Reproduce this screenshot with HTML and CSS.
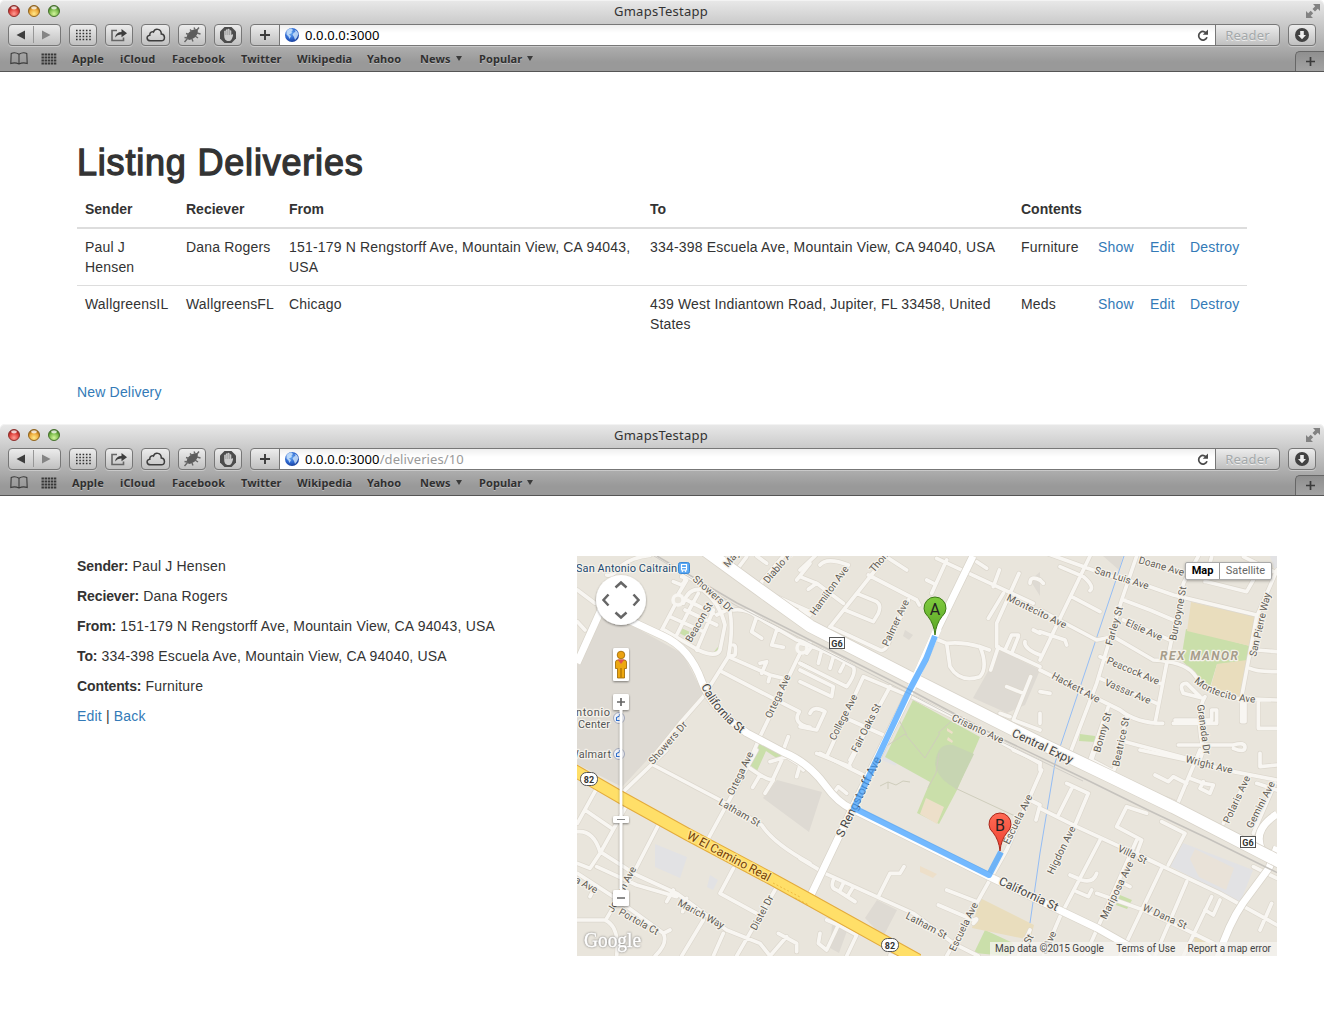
FILE: index.html
```html
<!DOCTYPE html>
<html lang="en">
<head>
<meta charset="utf-8">
<title>GmapsTestapp</title>
<link rel="stylesheet" href="styles.css">
</head>
<body>
<svg class="sprite" width="0" height="0" aria-hidden="true">
  <defs>
    <radialGradient id="red" cx=".5" cy=".75" r=".7"><stop offset="0" stop-color="#ff9d93"/><stop offset=".6" stop-color="#e0443e"/><stop offset="1" stop-color="#8f1a16"/></radialGradient>
    <radialGradient id="amber" cx=".5" cy=".75" r=".7"><stop offset="0" stop-color="#ffe98a"/><stop offset=".6" stop-color="#eda93a"/><stop offset="1" stop-color="#8f5a10"/></radialGradient>
    <radialGradient id="green" cx=".5" cy=".75" r=".7"><stop offset="0" stop-color="#d3f59c"/><stop offset=".6" stop-color="#7cbc4c"/><stop offset="1" stop-color="#366b1a"/></radialGradient>
    <radialGradient id="globe" cx=".4" cy=".35" r=".7"><stop offset="0" stop-color="#6fb0f5"/><stop offset=".6" stop-color="#2c66cf"/><stop offset="1" stop-color="#163a94"/></radialGradient>
  </defs>
  <symbol id="lights" viewBox="0 0 54 14">
    <g stroke-width="1"><circle cx="7" cy="7" r="5.500" fill="url(#red)" stroke="#8c3330"/><circle cx="27" cy="7" r="5.500" fill="url(#amber)" stroke="#8f6520"/><circle cx="47" cy="7" r="5.500" fill="url(#green)" stroke="#47702f"/></g>
    <g fill="#fff" opacity=".75"><ellipse cx="7" cy="3.800" rx="2.900" ry="1.600"/><ellipse cx="27" cy="3.800" rx="2.900" ry="1.600"/><ellipse cx="47" cy="3.800" rx="2.900" ry="1.600"/></g>
  </symbol>
  <symbol id="full" viewBox="0 0 14 14"><path d="M7 0h7v7l-2.200-2.200-2.800 2.700-2.500-2.500 2.700-2.800zM7 14H0V7l2.200 2.200L4.700 6.800l2.500 2.500-2.500 2.500z" fill="#828282"/></symbol>
  <symbol id="arrows" viewBox="0 0 53 22"><path d="M17 6.500v9L8.500 11z" fill="#3d3d3d"/><path d="M34 6.500v9l8.500-4.500z" fill="#858585"/><path d="M25.500 2v17" stroke="#979797"/></symbol>
  <symbol id="dots" viewBox="0 0 15 12"><path d="M0 1.500h15M0 4.500h15M0 7.500h15M0 10.500h15" stroke="#333" stroke-width="1.500" stroke-dasharray="1.600 1.700"/></symbol>
  <symbol id="grid" viewBox="0 0 16 12"><path d="M.5 1.500h15M.5 4.500h15M.5 7.500h15M.5 10.500h15" stroke="#383838" stroke-width="2" stroke-dasharray="2.400 .7"/></symbol>
  <symbol id="share" viewBox="0 0 18 14"><path d="M7 2.500H2v10h11.500V9.500" fill="none" stroke="#666" stroke-width="1.600"/><path d="M5 9.500Q6 4 11.500 4V1L17 5.300 11.500 9.300V6.500Q7.500 6.300 5 9.500z" fill="#3d3d3d"/></symbol>
  <symbol id="cloud" viewBox="0 0 20 14"><path d="M4.500 12.800C.2 12.800 0 7.500 3.800 7.200 3.500 4 6.500 3.200 7.500 4 9-.2 15.300.5 15.300 6c4.200.2 4.200 6.800 0 6.800z" fill="none" stroke="#3d3d3d" stroke-width="1.500"/></symbol>
  <symbol id="bug" viewBox="0 0 18 16"><path d="M3.500 11C4 6 8 2 14.500 2c1.500 5-2.500 10-8.500 11z" fill="#5c5c5c"/><path d="M1.500 15L5 11M14 3L16 .5M3 6.500l3 1M7 2.500l2 2M11 .5l1 2M9 12l1 2.500M12 9l3 2M14 6l3.500 1M1.500 10.500l3 .5" fill="none" stroke="#666" stroke-width="1.400"/></symbol>
  <symbol id="hand" viewBox="0 0 18 18"><path d="M5.500 1h7L17 5.500v7L12.500 17h-7L1 12.500v-7z" fill="#4c4c4c"/><path d="M5.200 9.500V5q.9-1 1.700 0V3.700q1-1 1.900 0v-.6q1-.8 1.800.3v1.200q1-.8 1.700.2V9l1-.8q1.200 0 .7 1.200C13 12.500 12.500 15 9.500 15 6.200 15 5.200 12.500 5.200 9.500z" fill="#ccc"/><path d="M6.900 5v4M8.800 4v5M10.600 4.500V9" stroke="#777" stroke-width=".5"/></symbol>
  <symbol id="plus" viewBox="0 0 10 10"><path d="M5 0v10M0 5h10" stroke="#3b3b3b" stroke-width="1.900"/></symbol>
  <symbol id="world" viewBox="0 0 16 16"><circle cx="8" cy="8" r="7" fill="url(#globe)"/><path d="M2.500 4q2-2.800 5-2.500L9 3 7.500 4.500l.3 1.500L5 7.500l2 1.500-1.500 3-1-2.500-2-2zM10.500 3l2.500 1 1.500 3-1.500 3.500-2 2.500-1-3-1.500-2.500 1.500-2 1.500-.5z" fill="#d3e8fc" opacity=".8"/></symbol>
  <symbol id="reload" viewBox="0 0 12 14"><path d="M9.800 5.800A4.300 4.300 0 1 0 10 9.300" fill="none" stroke="#4a4a4a" stroke-width="1.700"/><path d="M11 1.500v5.200H5.800L7.500 5z" fill="#4a4a4a"/></symbol>
  <symbol id="down" viewBox="0 0 14 14"><circle cx="7" cy="7" r="7" fill="#424242"/><path d="M5.200 3h3.600v4H11l-4 4.300L3 7h2.200z" fill="#eee"/></symbol>
  <symbol id="book" viewBox="0 0 18 13"><path d="M9 2.300Q5-.3 1.200 1.500L.8 11.500Q5 10 9 12q4-2 8.200-.5l-.4-10Q13-.3 9 2.300zV12" fill="none" stroke="#3c3c3c" stroke-width="1.100"/></symbol>
</svg>

<section class="window listing">
  <header class="chrome">
    <div class="titlebar"><svg class="lights"><use href="#lights"/></svg><span>GmapsTestapp</span><svg class="full"><use href="#full"/></svg></div>
    <div class="toolbar">
      <span class="btn nav"><svg width="53" height="22"><use href="#arrows"/></svg></span>
      <span class="btn"><svg width="15" height="12"><use href="#dots"/></svg></span>
      <span class="btn"><svg width="18" height="14"><use href="#share"/></svg></span>
      <span class="btn cloud"><svg width="20" height="14"><use href="#cloud"/></svg></span>
      <span class="btn"><svg width="18" height="16"><use href="#bug"/></svg></span>
      <span class="btn"><svg width="18" height="18"><use href="#hand"/></svg></span>
      <div class="address">
        <span class="add"><svg width="10" height="10"><use href="#plus"/></svg></span>
        <div class="url"><svg width="16" height="16"><use href="#world"/></svg><span>0.0.0.0:3000</span><svg class="reload" width="12" height="14"><use href="#reload"/></svg></div>
        <span class="reader">Reader</span>
      </div>
      <span class="btn"><svg width="14" height="14"><use href="#down"/></svg></span>
    </div>
    <nav class="bookmarks">
      <svg width="18" height="13"><use href="#book"/></svg><svg width="16" height="12"><use href="#grid"/></svg>
      <span>Apple</span><span>iCloud</span><span>Facebook</span><span>Twitter</span><span>Wikipedia</span><span>Yahoo</span><span class="menu">News</span><span class="menu">Popular</span>
      <b class="newtab"><svg width="9" height="9" viewBox="0 0 10 10"><use href="#plus"/></svg></b>
    </nav>
  </header>
  <main class="page list">
    <h1>Listing Deliveries</h1>
    <table>
      <colgroup><col class="c-sender"><col class="c-reciever"><col class="c-from"><col class="c-to"><col class="c-contents"><col class="c-show"><col class="c-edit"><col></colgroup>
      <thead><tr><th>Sender</th><th>Reciever</th><th>From</th><th>To</th><th>Contents</th><th></th><th></th><th></th></tr></thead>
      <tbody>
        <tr><td>Paul J<br>Hensen</td><td>Dana Rogers</td><td>151-179 N Rengstorff Ave, Mountain View, CA 94043,<br>USA</td><td>334-398 Escuela Ave, Mountain View, CA 94040, USA</td><td>Furniture</td><td><a>Show</a></td><td><a>Edit</a></td><td><a>Destroy</a></td></tr>
        <tr><td>WallgreensIL</td><td>WallgreensFL</td><td>Chicago</td><td>439 West Indiantown Road, Jupiter, FL 33458, United<br>States</td><td>Meds</td><td><a>Show</a></td><td><a>Edit</a></td><td><a>Destroy</a></td></tr>
      </tbody>
    </table>
    <a class="new">New Delivery</a>
  </main>
</section>

<section class="window">
  <header class="chrome">
    <div class="titlebar"><svg class="lights"><use href="#lights"/></svg><span>GmapsTestapp</span><svg class="full"><use href="#full"/></svg></div>
    <div class="toolbar">
      <span class="btn nav"><svg width="53" height="22"><use href="#arrows"/></svg></span>
      <span class="btn"><svg width="15" height="12"><use href="#dots"/></svg></span>
      <span class="btn"><svg width="18" height="14"><use href="#share"/></svg></span>
      <span class="btn cloud"><svg width="20" height="14"><use href="#cloud"/></svg></span>
      <span class="btn"><svg width="18" height="16"><use href="#bug"/></svg></span>
      <span class="btn"><svg width="18" height="18"><use href="#hand"/></svg></span>
      <div class="address">
        <span class="add"><svg width="10" height="10"><use href="#plus"/></svg></span>
        <div class="url"><svg width="16" height="16"><use href="#world"/></svg><span>0.0.0.0:3000<i>/deliveries/10</i></span><svg class="reload" width="12" height="14"><use href="#reload"/></svg></div>
        <span class="reader">Reader</span>
      </div>
      <span class="btn"><svg width="14" height="14"><use href="#down"/></svg></span>
    </div>
    <nav class="bookmarks">
      <svg width="18" height="13"><use href="#book"/></svg><svg width="16" height="12"><use href="#grid"/></svg>
      <span>Apple</span><span>iCloud</span><span>Facebook</span><span>Twitter</span><span>Wikipedia</span><span>Yahoo</span><span class="menu">News</span><span class="menu">Popular</span>
      <b class="newtab"><svg width="9" height="9" viewBox="0 0 10 10"><use href="#plus"/></svg></b>
    </nav>
  </header>
  <main class="page detail">
    <div class="facts">
      <p><strong>Sender:</strong> Paul J Hensen</p>
      <p><strong>Reciever:</strong> Dana Rogers</p>
      <p><strong>From:</strong> 151-179 N Rengstorff Ave, Mountain View, CA 94043, USA</p>
      <p><strong>To:</strong> 334-398 Escuela Ave, Mountain View, CA 94040, USA</p>
      <p><strong>Contents:</strong> Furniture</p>
      <p><a>Edit</a> | <a>Back</a></p>
    </div>
    <div class="map">
      <svg width="700" height="400" viewBox="577 556 700 400">
        <defs>
          <linearGradient id="pinA" x2="0" y2="1"><stop offset="0" stop-color="#7fcb3e"/><stop offset="1" stop-color="#5aa524"/></linearGradient>
          <linearGradient id="pinB" x2="0" y2="1"><stop offset="0" stop-color="#ff6a55"/><stop offset="1" stop-color="#ee4030"/></linearGradient>
          <filter id="soft" x="-30%" y="-30%" width="160%" height="170%"><feDropShadow dx="0" dy="1" stdDeviation="1" flood-opacity=".45"/></filter>
          <g id="streets">
            <path transform="translate(570 550) scale(.33333)" d="M22 120L75 160M22 215L45 240M110 75Q130 80 150 50 190 20 240 16M340 70L370 90Q450 130 480 185 490 240 475 320L400 440 330 520 240 632M335 80Q355 85 335 105L310 95M325 132L350 90M315 165L270 250M340 160Q355 110 400 120 450 160 465 225L450 300Q440 325 385 300L280 238M345 180L440 225M300 200L400 245M385 130L360 175 320 255M430 180L380 300M350 150L430 190M470 180L440 195M490 285Q500 285 495 315L475 320 600 375 640 385 632 405M600 375L595 395M570 340L590 335 575 370M455 365L600 440 688 485Q665 520 720 532M490 180Q530 175 560 200L680 270 720 280M560 200L545 245 575 265M620 240L605 285 640 292M690 310L570 560 540 630M655 560L640 600M415 18L500 70M500 60L530 20M640 18L575 95V120L720 185M680 90L720 40M560 18L590 40M690 340L720 355"/>
            <path transform="translate(800 550) scale(.33333)" d="M0 80L50 100 130 160M0 60L45 18M60 45Q80 20 145 45M50 100L25 118M250 30L75 250M255 18L320 60M205 75L350 150 358 165M170 130L230 155Q245 165 235 190L220 215 135 180M90 230L240 300Q255 305 265 280L325 150M0 180L30 195M410 25L700 160M440 30L395 130M380 90L400 100M530 35L560 55M598 60L580 110M657 70L590 220V290L720 350M595 290L572 360M610 130L565 205M690 100Q690 75 720 90M415 270L440 280 450 350Q480 400 540 380 565 350 540 290 490 275 440 280M540 290L568 300M615 300L635 255 655 255M635 310L655 260M675 275Q670 295 720 315M692 380L640 510 720 540M600 490L630 500M620 410L670 430M700 240L720 250M0 280Q60 290 160 350 170 370 140 410L0 340M20 310L35 290M55 340L65 300M90 355L100 320M120 365L130 345M0 360L100 410 95 440 0 395M310 430L190 380 80 620M270 410L150 630M150 510L250 555M50 610L150 650M335 440L500 520 720 640M30 490Q40 465 75 485L50 540 0 530"/>
            <path transform="translate(1040 550) scale(.33333)" d="M20 10L200 75 300 100 400 135 650 195M150 18L0 330M60 50L130 80Q165 110 150 122M95 140L180 185M0 245L75 270 80 285M0 90L10 100M290 18L245 150 170 400 90 610M250 150L330 180 400 210M0 180L170 270 220 260 340 330Q430 335 460 370 500 430 580 445L711 450M475 18L430 100 380 340 345 520M250 210L390 270M180 320L360 400M180 385L350 460M0 360L130 425 240 480Q290 520 368 520M205 470L150 630M260 500L230 630M255 575L440 625M711 60L650 200 620 360 605 440M500 95L620 125 640 90M515 20L495 95M650 300L711 305M630 355Q650 365 711 365M605 450V515H615V450M490 445L430 430Q415 400 440 400L480 440M495 440Q465 490 490 600L480 630M400 520H530V480H515V510H405M415 585H580Q615 575 615 592T580 595M655 450V535H711M610 20L711 70M0 425L30 430M0 490V520"/>
            <path transform="translate(570 750) scale(.33333)" d="M290 0L160 125M250 45L450 150 575 225Q610 280 720 340M560 0L415 265M640 20L610 85Q605 100 540 55M610 90L585 130M570 75L548 112M600 35L650 20 690 45 680 80M80 115L22 220M45 180L125 235M165 175L90 310 60 355 22 340M22 245Q70 240 90 305L200 375 320 430 470 540 570 580 600 618M265 225L190 370 110 505M22 370L130 440 280 550 300 540M80 350L200 405 320 440M70 420L60 440M310 420L290 455M350 445L338 485M280 550Q295 580 255 618M22 510H105Q150 530 140 618M490 355L450 430 560 490M615 420L500 618M400 510L335 618M460 550L430 618M600 618L650 560M625 550L680 580V605"/>
            <path transform="translate(800 750) scale(.33333)" d="M60 10L190 75M150 40L170 0M100 130L115 110 140 130M0 325L75 370 340 490 460 580 535 618M235 440L270 370 300 370 312 350M100 390Q90 415 110 420L165 455M130 400L118 425M160 410L142 440M725 60L620 300 530 460 440 618M440 420L530 455M415 465L520 510Q540 500 520 520M80 510L115 525 80 600 55 580 60 550M115 525L170 555 140 618M690 150L720 165 708 210M690 540L655 618M640 0L720 35M0 50L10 60M270 615L300 625"/>
            <path transform="translate(1040 750) scale(.33333)" d="M0 175L110 230 370 350 540 430 711 525M80 100L145 130 105 225M95 115L55 195M180 270L60 500 10 618M90 375L125 390Q160 400 170 370M110 425L145 440 155 420M320 190L260 170 230 230 305 270 290 310 370 350M365 215L435 250 385 345M290 270L170 540 135 618M250 400L270 410M365 355L240 618M440 395L345 618M170 430L310 480 440 540 560 600M515 440L430 618M495 480L520 495 540 450M300 0L440 30 580 65 711 90M480 0L415 155M345 75L385 95 400 80 440 100M450 85L490 100 520 105 510 130 480 115 490 95M625 80L550 220M705 100L640 250M165 0L155 30 220 65 245 0M660 10V50L711 45M695 460L660 540M650 100L711 120M630 220L660 230M375 145L400 155M0 40V60M640 350L711 385"/>
          </g>
          <g id="avenues">
            <path d="M577 663L600 612 612 585M612 612L633 622 663 636Q690 648 702 682 712 710 747 733L783 752Q808 762 825 785 838 803 852 809L988 876 1097 928 1150 958M973 556L938 628 909 693 852 809 810 897M1277 847L1269 868 1243 903Q1228 925 1218 958M1262 850Q1252 830 1277 814"/>
          </g>
          <path id="calif" d="M701 686Q714 716 751 741"/>
          <path id="monte" d="M1194 682Q1216 702 1264 703"/>
        </defs>
        <rect x="577" y="556" width="700" height="400" fill="#e9e5dc"/>
        <g fill="#dedad3">
          <path d="M577 660L597 618 633 626 683 654 704 695 647 760 622 787 577 764zM1000 650L1040 670 1025 705 1007 713 973 698zM777 780L822 792 809 832 763 798zM877 900L897 910 883 937 865 918zM905 630l8 5-4 5-6-4zM1103 556h20l-4 14zM832 925l15 6-8 22-9-5zM1030 580l10-8v24zM640 693l12 3M1005 679l14 4-3 6-13-5z"/>
        </g>
        <g fill="#e2e2e4"><path d="M1183 843L1253 870 1240 903 1170 866zM655 844L687 857 680 878 655 867zM886 750l12 5-2 11-14-6zM906 760l16 9-2 7-18-9zM710 875l8 5-5 10-6-3zM1270 556h7v20z"/></g>
        <path d="M1195 849l39 19-8 22-27-13-9-18z" fill="#e9e2d8"/>
        <g fill="#cadfaa">
          <path d="M913 700L980 737 957 790 939 824 917 813 930 782 885 757zM1186 629L1250 646 1248 663 1217 664 1210 687 1181 660zM681 628l9 4-3 5-8-4zM717 648l2-2 1 7-6-1zM757 742L788 756 778 759 766 751 757 771 750 765zM985 930L1013 943 1008 956 974 953zM1120 895l12 5-5 9-11-4zM1080 734l15 2v6l-16-1z"/>
        </g>
        <path d="M935 764Q937 742 953 745L974 754 957 789Q938 780 935 764z" fill="#c7d5b2"/>
        <g fill="#e9ddbd"><path d="M1191 602L1257 617 1250 646 1187 631zM1217 664L1247 660 1244 697 1210 690zM980 898L1034 925 1030 940 972 928zM1195 936l22 7-8 12-16-5z"/></g>
        <path d="M926 798l18 9-7 17-17-10zM920 866l17 8-4 4-13-6zM947 728l6 4-1 2-5-3zM948 737l5 4-1 2-5-3z" fill="#eddfc9"/>
        <path d="M885 747l20-13 20 24 15-25M907 735l-8-15M928 788l8-15 3-20M938 733l18-16M880 786l8-4 8 3 7-4 7 1M888 782v7M955 788l60 28" fill="none" stroke="#cfcdbc" stroke-width="1"/>
        <path d="M1124 556L1060 747 1055 763 1040 853 1030 923" fill="none" stroke="#94bdf5"/>
        <use href="#streets" class="street case"/>
        <use href="#streets" class="street"/>
        <g class="street ring"><circle cx="678" cy="600" r="5"/><circle cx="802" cy="648" r="5"/></g>
        <use href="#avenues" class="avenue case"/>
        <use href="#avenues" class="avenue"/>
        <path class="expy edge" d="M698 545L757 588 810 626 913 679 1040 743 1107 775 1173 807 1280 862"/>
        <path class="expy" d="M698 545L757 588 810 626 913 679 1040 743 1107 775 1173 807 1280 862"/>
        <path d="M909 693L938 628" stroke="#fff" stroke-width="8"/>
        <path d="M657 556L737 603 810 640 908 689 1000 738 1083 778 1150 811 1207 838 1280 874" fill="none" stroke="#c5c2bd" stroke-width="1.500"/>
        <path d="M654 556L735 605 810 643 908 693 1000 741 1083 781" fill="none" stroke="#d1cec8" stroke-width="1"/>
        <path class="camino edge" d="M570 768L622 798 687 834 770 878 810 900 918 960"/>
        <path class="camino" d="M570 768L622 798 687 834 770 878 810 900 918 960"/>
        <path d="M773 883l27 14M795 898l14 7" stroke="#e8a92e" stroke-width=".7" stroke-dasharray="2 2"/>

        <g class="labels">
          <text transform="translate(692 580) rotate(41)" textLength="50">Showers Dr</text>
          <text transform="translate(691 643) rotate(-60)" textLength="44">Beacon St</text>
          <text transform="translate(728 568) rotate(-50)">May</text>
          <text transform="translate(768 584) rotate(-50)">Diablo A</text>
          <text transform="translate(771 719) rotate(-65)" textLength="47">Ortega Ave</text>
          <text transform="translate(653 765) rotate(-49)" textLength="53">Showers Dr</text>
          <text transform="translate(733 796) rotate(-64)" textLength="47">Ortega Ave</text>
          <text transform="translate(815 616) rotate(-54)" textLength="58">Hamilton Ave</text>
          <text transform="translate(874 573) rotate(-50)">Thom</text>
          <text transform="translate(888 647) rotate(-65)" textLength="50">Palmer Ave</text>
          <text transform="translate(835 741) rotate(-63)" textLength="50">College Ave</text>
          <text transform="translate(857 753) rotate(-63)" textLength="53">Fair Oaks St</text>
          <text transform="translate(951 720) rotate(25)" textLength="56">Crisanto Ave</text>
          <text transform="translate(1006 600) rotate(26)" textLength="65">Montecito Ave</text>
          <text transform="translate(1138 563) rotate(16)" textLength="47">Doane Ave</text>
          <text transform="translate(1094 573) rotate(17)" textLength="56">San Luis Ave</text>
          <text transform="translate(1112 646) rotate(-74)" textLength="40">Farley St</text>
          <text transform="translate(1176 641) rotate(-79)" textLength="55">Burgoyne St</text>
          <text transform="translate(1125 625) rotate(24)" textLength="39">Elsie Ave</text>
          <text transform="translate(1256 657) rotate(-77)" textLength="65">San Pierre Way</text>
          <text transform="translate(1106 663) rotate(23)" textLength="56">Peacock Ave</text>
          <text transform="translate(1104 685) rotate(23)" textLength="49">Vassar Ave</text>
          <text textLength="66"><textPath href="#monte">Montecito Ave</textPath></text>
          <text transform="translate(1051 678) rotate(28)" textLength="53">Hackett Ave</text>
          <text transform="translate(1197 705) rotate(82)" textLength="50">Granada Dr</text>
          <text transform="translate(1100 753) rotate(-74)" textLength="41">Bonny St</text>
          <text transform="translate(1119 767) rotate(-78)" textLength="50">Beatrice St</text>
          <text transform="translate(1185 762) rotate(14)" textLength="48">Wright Ave</text>
          <text transform="translate(1229 824) rotate(-65)" textLength="51">Polaris Ave</text>
          <text transform="translate(1252 829) rotate(-63)" textLength="51">Gemini Ave</text>
          <text transform="translate(1053 875) rotate(-64)" textLength="52">Higdon Ave</text>
          <text transform="translate(1117 851) rotate(25)" textLength="31">Villa St</text>
          <text transform="translate(1106 920) rotate(-64)" textLength="63">Mariposa Ave</text>
          <text transform="translate(1142 910) rotate(24)" textLength="47">W Dana St</text>
          <text transform="translate(718 804) rotate(30)" textLength="46">Latham St</text>
          <text transform="translate(677 905) rotate(28)" textLength="51">Marich Way</text>
          <text transform="translate(756 931) rotate(-62)" textLength="38">Distel Dr</text>
          <text transform="translate(618 914) rotate(29)" textLength="44">Portola Ct</text>
          <text transform="translate(574 882) rotate(28)">a Ave</text>
          <text transform="translate(613 913) rotate(-62)" textLength="50">Jordan Ave</text>
          <text transform="translate(1009 845) rotate(-64)" textLength="54">Escuela Ave</text>
          <text transform="translate(955 952) rotate(-64)" textLength="53">Escuela Ave</text>
          <text transform="translate(905 918) rotate(28)" textLength="45">Latham St</text>
          <text transform="translate(1025 952) rotate(-60)">S St</text>
          <text transform="translate(1046 955) rotate(-64)">a Ave</text>
          <g class="big">
            <text><textPath href="#calif" textLength="63">California St</textPath></text>
            <text transform="translate(1011 736) rotate(25)" textLength="66">Central Expy</text>
            <text transform="translate(843 838) rotate(-64)" textLength="88">S Rengstorff Ave</text>
            <text transform="translate(998 884) rotate(25)" textLength="64">California St</text>
          </g>
          <text class="gold" transform="translate(686 838) rotate(28)" textLength="93">W El Camino Real</text>
          <text class="place rail" x="576" y="572" textLength="101">San Antonio Caltrain</text>
          <text class="place" x="576" y="716" textLength="34">ntonio</text>
          <text class="place" x="578" y="728" textLength="32">Center</text>
          <text class="place" x="569" y="758" textLength="42">Walmart</text>
          <text class="area" x="1160" y="660" textLength="78">REX MANOR</text>
        </g>
        <g class="shield">
          <rect x="829.500" y="637.500" width="15" height="11"/><text x="837" y="646.500">G6</text>
          <rect x="1240.500" y="836.500" width="15" height="11"/><text x="1248" y="845.500">G6</text>
          <rect x="580.500" y="772.500" width="17" height="13" rx="6"/><text x="589" y="782.500">82</text>
          <rect x="881.500" y="938.500" width="17" height="13" rx="6"/><text x="890" y="948.500">82</text>
        </g>
        <g><rect x="678.500" y="562.500" width="11" height="11" rx="2" fill="#5aa7f2" stroke="#3a8ad8"/><path d="M681.500 564.500h5v5.500h-5zM682 572l1-1.500m3 1.500l-1-1.500M681.500 567.500h5" fill="none" stroke="#fff" stroke-width="1.200"/></g>
        <g fill="#f3f4f8" stroke="#a3a9bb"><circle cx="619" cy="718" r="5.500"/><circle cx="619" cy="754" r="5.500"/></g>
        <path d="M616.500 720.500v-3l3-1.500v-1.500l2 1v5zM616.500 756.500v-3l3-1.500v-1.500l2 1v5z" fill="none" stroke="#2f6fce" stroke-width="1.100"/>

        <path d="M935 636L926 659 909 691 854 808 989 875 1001 852" fill="none" stroke="rgb(68,162,255)" stroke-opacity=".75" stroke-width="6" stroke-linejoin="round"/>
        <g class="pin">
          <path d="M935 635Q934 624 928 616.500A11 11 0 1 1 942 616.500Q936 624 935 635z" fill="url(#pinA)" stroke="#3e7a17"/><text x="935" y="614.500">A</text>
          <path d="M1000 851Q999 840 993 832.500A11 11 0 1 1 1007 832.500Q1001 840 1000 851z" fill="url(#pinB)" stroke="#a8281c"/><text x="1000" y="830.500">B</text>
        </g>

        <g filter="url(#soft)">
          <circle cx="621" cy="600" r="25" fill="#fff"/>
          <rect x="613" y="648" width="16" height="33" rx="1.500" fill="#fff"/>
          <rect x="619.700" y="700" width="2.600" height="196" fill="#fff"/>
          <rect x="613" y="694" width="16" height="16" rx="1.500" fill="#fff"/>
          <rect x="613" y="816" width="16" height="7" rx="1.500" fill="#fff"/>
          <rect x="613" y="890" width="16" height="16" rx="1.500" fill="#fff"/>
        </g>
        <path d="M615.500 587.500l5.500-5 5.500 5M615.500 612.500l5.500 5 5.500-5M608.500 594.500l-5 5.500 5 5.500M633.500 594.500l5 5.500-5 5.500" fill="none" stroke="#666" stroke-width="2.500"/>
        <path d="M617 702h8M621 698v8M617 898h8" stroke="#666" stroke-width="1.700"/><path d="M617 819.500h8" stroke="#888"/>
        <path d="M615.500 662q0-2 2.500-2h6q2.500 0 2.500 2v6.500h-2V678h-7v-9.500h-2z" fill="#eda810" stroke="#9a6300" stroke-width=".8"/><circle cx="621" cy="655" r="3.800" fill="#eba312" stroke="#9a6300" stroke-width=".8"/><path d="M617.500 659.500h7L621 664z" fill="#e05252"/><path d="M621 668v9.500" stroke="#9a6300"/>
        <text class="logo" x="584" y="947" textLength="57" lengthAdjust="spacingAndGlyphs">Google</text>
      </svg>
      <div class="maptype"><b>Map</b><span>Satellite</span></div>
      <div class="credits"><span>Map data ©2015 Google</span><span>Terms of Use</span><span>Report a map error</span></div>
    </div>
  </main>
</section>
</body>
</html>
```
FILE: styles.css
```css
* { box-sizing: border-box; }
body { margin: 0; background: #fff; color: #333; font: 14px/20px "Liberation Sans", Arial, sans-serif; letter-spacing: .18px; }
svg { display: block; flex: none; }
.sprite { position: absolute; }
.listing { height: 424px; }

/* browser chrome */
.chrome { height: 72px; border-bottom: 1px solid #555; border-radius: 5px 5px 0 0; background: linear-gradient(#e9e9e9, #cacaca 24px, #a9a9a9 50px, #999 62px, #999); font-family: "Noto Sans", sans-serif; box-shadow: inset 0 1px #f3f3f3; }
.titlebar { height: 24px; display: flex; align-items: center; justify-content: space-between; padding: 0 4px 2px 7px; font-size: 13px; letter-spacing: .25px; }
.lights { width: 54px; height: 14px; }
.full { width: 14px; height: 14px; margin-left: 45px; }
.toolbar { display: flex; gap: 8px; height: 22px; padding: 0 8px; }
.btn, .address { height: 22px; border: 1px solid #777; border-radius: 4px; background: linear-gradient(#ececec, #c0c0c0); box-shadow: 0 1px rgba(255,255,255,.35); display: flex; }
.btn { width: 28px; align-items: center; justify-content: center; flex: none; }
.nav { width: 53px; }
.cloud { width: 29px; }
.address { flex: 1; }
.add { width: 28px; display: flex; align-items: center; justify-content: center; }
.url { flex: 1; display: flex; align-items: center; gap: 5px; padding: 0 6px 0 4px; background: linear-gradient(#efefef, #fff 8px); border: solid #777; border-width: 0 1px; color: #000; font-size: 13px; letter-spacing: .1px; }
.url i { font-style: normal; color: #999; letter-spacing: .1px; }
.reload { margin-left: auto; }
.reader { width: 63px; line-height: 21px; text-align: center; font-size: 13px; letter-spacing: .2px; color: #a3a8aa; text-shadow: 0 1px #eee; }
.bookmarks { display: grid; grid-template-columns: 31px 31px 48px 52px 69px 56px 70px 53px 59px 1fr 29px; height: 25px; padding-left: 10px; align-items: center; font-size: 11px; letter-spacing: .1px; font-weight: bold; color: #303030; text-shadow: 0 1px rgba(255,255,255,.35); white-space: nowrap; }
.menu::after { content: ""; display: inline-block; margin: 0 0 2px 5px; border: solid transparent; border-width: 5px 3.5px 0; border-top-color: #3b3b3b; }
.newtab { align-self: end; width: 29px; height: 20px; border: 1px solid #666; border-width: 1px 0 0 1px; border-radius: 5px 0 0; background: linear-gradient(#8f8f8f, #a3a3a3); display: flex; align-items: center; justify-content: center; }

/* pages */
.page { padding-left: 77px; }
a { color: #337ab7; }
.list { padding-top: 71px; }
h1 { margin: 0 0 8px; height: 40px; font-size: 36px; line-height: 40px; font-weight: 400; letter-spacing: .8px; -webkit-text-stroke: 1.3px #333; }
table { width: 1170px; table-layout: fixed; border-collapse: separate; border-spacing: 0; }
th, td { padding: 8px; text-align: left; vertical-align: top; white-space: nowrap; }
th { height: 38px; border-bottom: 2px solid #ddd; letter-spacing: 0; }
tr + tr td { border-top: 1px solid #ddd; }
.c-sender { width: 101px; }
.c-reciever { width: 103px; }
.c-from { width: 361px; }
.c-to { width: 371px; }
.c-contents { width: 77px; }
.c-show { width: 52px; }
.c-edit { width: 40px; }
.new { display: block; margin-top: 40px; }
.detail { display: flex; padding-top: 60px; }
.facts { width: 500px; }
.facts p { margin: 0 0 10px; }
.facts strong { letter-spacing: -.1px; }

/* map */
.map { position: relative; width: 700px; height: 400px; overflow: hidden; font-family: Roboto, sans-serif; letter-spacing: 0; }
.street { fill: none; stroke: #f8f6f2; stroke-width: 11; stroke-linecap: round; stroke-linejoin: round; }
.street.case { stroke: #dcd7cd; stroke-width: 15; }
.ring { stroke-width: 3.5; }
.avenue { fill: none; stroke: #fff; stroke-width: 7; stroke-linejoin: round; }
.avenue.case { stroke: #d9d4ca; stroke-width: 8.5; }
.expy { fill: none; stroke: #fff; stroke-width: 12; }
.expy.edge { stroke: #d8d3c9; stroke-width: 13.5; }
.camino { fill: none; stroke: #ffdf68; stroke-width: 11; }
.camino.edge { stroke: #e3ab3c; stroke-width: 13; }
.labels { font-size: 10px; fill: #5e5a53; stroke: #f4f1ea; stroke-width: 2.5; stroke-linejoin: round; paint-order: stroke; }
.big { font-size: 12px; fill: #444; }
.gold { font-size: 12px; fill: #744108; stroke: #ffe48a; }
.place { font-size: 11px; fill: #555; }
.rail { fill: #22496f; }
.area { font-size: 12px; font-weight: bold; font-style: italic; fill: #a79e8c; }
.shield { fill: #fff; stroke: #555; font-size: 9px; font-weight: bold; text-anchor: middle; }
.shield text { fill: #333; stroke: none; }
.pin text { font-size: 16px; text-anchor: middle; fill: #222; }
.logo { font: 20px "Liberation Serif", serif; fill: #fff; stroke: #fff; stroke-width: .4; filter: drop-shadow(0 0 1px #777); }
.maptype { position: absolute; left: 608px; top: 6px; width: 87px; height: 18px; display: flex; background: #fff; border: 1px solid #aaa; border-radius: 2px; box-shadow: 0 1px 3px rgba(0,0,0,.3); font-size: 11px; line-height: 16px; text-align: center; color: #666; }
.maptype b { width: 34px; color: #000; border-right: 1px solid #999; }
.maptype span { flex: 1; }
.credits { position: absolute; right: 0; bottom: 0; width: 287px; height: 14px; display: flex; justify-content: space-between; padding: 0 6px 0 5px; background: rgba(245,243,240,.78); font-size: 10px; line-height: 14px; color: #444; white-space: nowrap; }
```
